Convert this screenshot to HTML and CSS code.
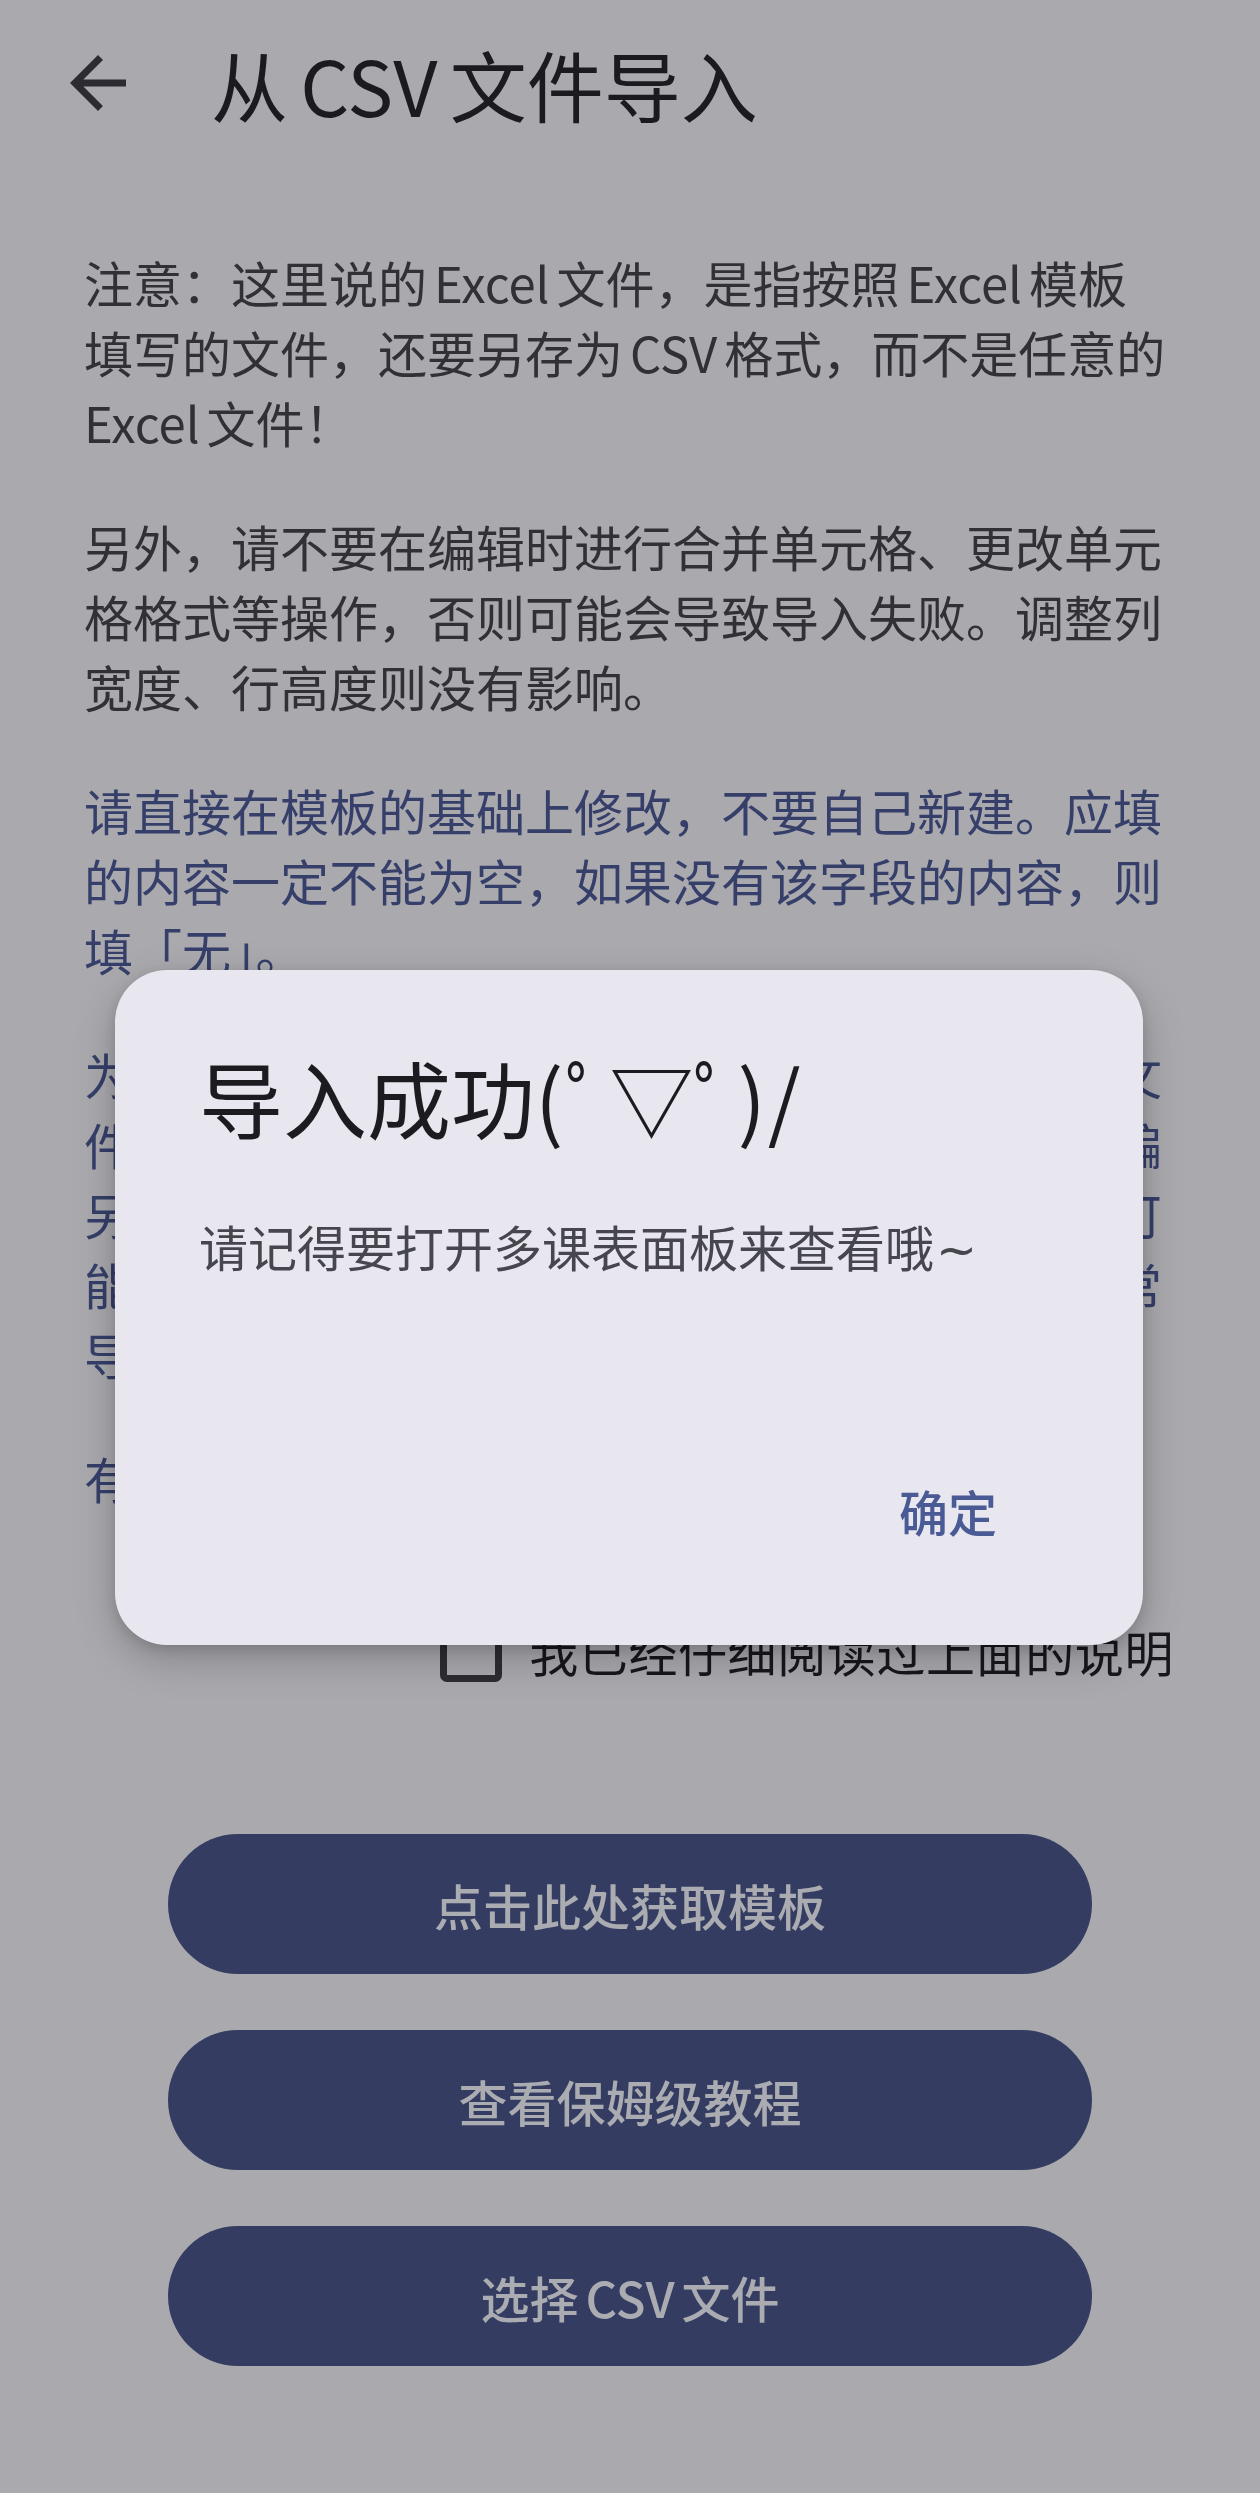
FILE: index.html
```html
<!DOCTYPE html>
<html lang="zh-CN">
<head>
<meta charset="utf-8">
<title>从 CSV 文件导入</title>
<link rel="stylesheet" href="styles.css">
</head>
<body>
<div class="screen">
  <header class="toolbar">
    <button class="back" aria-label="返回">
      <svg viewBox="0 0 24 24" width="84" height="84"><path d="M20 11H7.83l5.59-5.59L12 4l-8 8 8 8 1.41-1.41L7.83 13H20v-2z"/></svg>
    </button>
    <h1 class="title">从 CSV 文件导入</h1>
  </header>

  <main class="content">
    <p class="para">注意：这里说的 Excel 文件，是指按照 Excel 模板<br>填写的文件，还要另存为 CSV 格式，而不是任意的<br>Excel 文件！</p>
    <p class="para">另外，请不要在编辑时进行合并单元格、更改单元<br>格格式等操作，否则可能会导致导入失败。调整列<br>宽度、行高度则没有影响。</p>
    <p class="para blue">请直接在模板的基础上修改，不要自己新建。应填<br>的内容一定不能为空，如果没有该字段的内容，则<br>填「无」。</p>
    <p class="para blue">为了避免乱码，编辑完成后请另存为逗号分隔的文<br>件，并选择正确的编码格式。如果使用其他软件编<br>另存时请留意文件的后缀名和编码格式，否则很可<br>能会出现乱码或者内容缺失的情况，进而引起异常<br>导致导入失败。</p>
    <p class="para blue">有任何问题请加群反馈。</p>

    <label class="agree">
      <span class="box"></span>
      <span class="agree-text">我已经仔细阅读过上面的说明</span>
    </label>
  </main>

  <div class="actions">
    <button class="pill">点击此处获取模板</button>
    <button class="pill">查看保姆级教程</button>
    <button class="pill">选择 CSV 文件</button>
  </div>

  <div class="dialog" role="dialog">
    <h2 class="dialog-title">导入成功<span class="kaomoji">(ﾟ▽ﾟ)/</span></h2>
    <p class="dialog-body">请记得要打开多课表面板来查看哦<span class="tilde">~</span></p>
    <div class="dialog-actions">
      <button class="text-btn">确定</button>
    </div>
  </div>
</div>
</body>
</html>
```

FILE: styles.css
```css
* { box-sizing: border-box; }

html, body {
  margin: 0;
  padding: 0;
  background: #aaa9ae;
}

body {
  font-family: "Noto Sans CJK SC", "Noto Sans", sans-serif;
  color: #313036;
}

.screen {
  position: relative;
  width: 1260px;
  min-height: 2493px;
}

.toolbar {
  height: 166px;
  display: flex;
  align-items: center;
  padding-left: 56px;
}

.back {
  width: 84px;
  height: 84px;
  padding: 0;
  border: 0;
  background: none;
  display: flex;
}

.back svg { fill: #2c2b31; }

.title {
  margin: 0 0 0 71px;
  font-size: 77px;
  line-height: 1;
  font-weight: 400;
  color: #1b1a1f;
  word-spacing: -5px;
}

.content {
  padding: 81px 86px 0 84px;
}

.para {
  margin: 0 0 54px;
  font-size: 49px;
  line-height: 70px;
  white-space: nowrap;
  word-spacing: -4px;
}

.blue { color: #353f69; }

.agree {
  display: flex;
  justify-content: flex-end;
  align-items: center;
  height: 168px;
  margin-top: 8px;
}

.box {
  width: 62px;
  height: 62px;
  border: 7px solid #2d2c32;
  border-radius: 7px;
  margin-right: 27px;
}

.agree-text {
  font-size: 49px;
  line-height: 70px;
  letter-spacing: 0.6px;
  color: #18171c;
}

.actions {
  display: flex;
  flex-direction: column;
  gap: 56px;
  padding: 0 168px;
  margin-top: 99px;
}

.pill {
  height: 140px;
  border: 0;
  border-radius: 70px;
  background: #343d61;
  color: #abacb2;
  font-family: inherit;
  font-size: 49px;
  font-weight: 500;
  word-spacing: -4px;
}

.dialog {
  position: absolute;
  left: 115px;
  top: 970px;
  width: 1028px;
  height: 675px;
  border-radius: 52px;
  background: #e8e7ef;
  box-shadow: 0 14px 40px rgba(0, 0, 0, 0.22), 0 4px 12px rgba(0, 0, 0, 0.12);
  display: flex;
  flex-direction: column;
  padding: 71px 104px 65px 84px;
}

.dialog-title {
  margin: 0;
  font-size: 84px;
  line-height: 112px;
  font-weight: 400;
  color: #1c1b20;
}

.kaomoji { letter-spacing: 2px; }

.dialog-body {
  margin: 58px 0 0;
  font-size: 49px;
  line-height: 70px;
  color: #46464e;
}

.tilde {
  font-family: "DejaVu Sans", sans-serif;
  margin-left: 2px;
}

.dialog-actions {
  margin-top: auto;
  display: flex;
  justify-content: flex-end;
}

.text-btn {
  height: 140px;
  padding: 0 42px;
  border: 0;
  background: none;
  font-family: inherit;
  font-size: 49px;
  font-weight: 500;
  color: #4a5a94;
}
```
